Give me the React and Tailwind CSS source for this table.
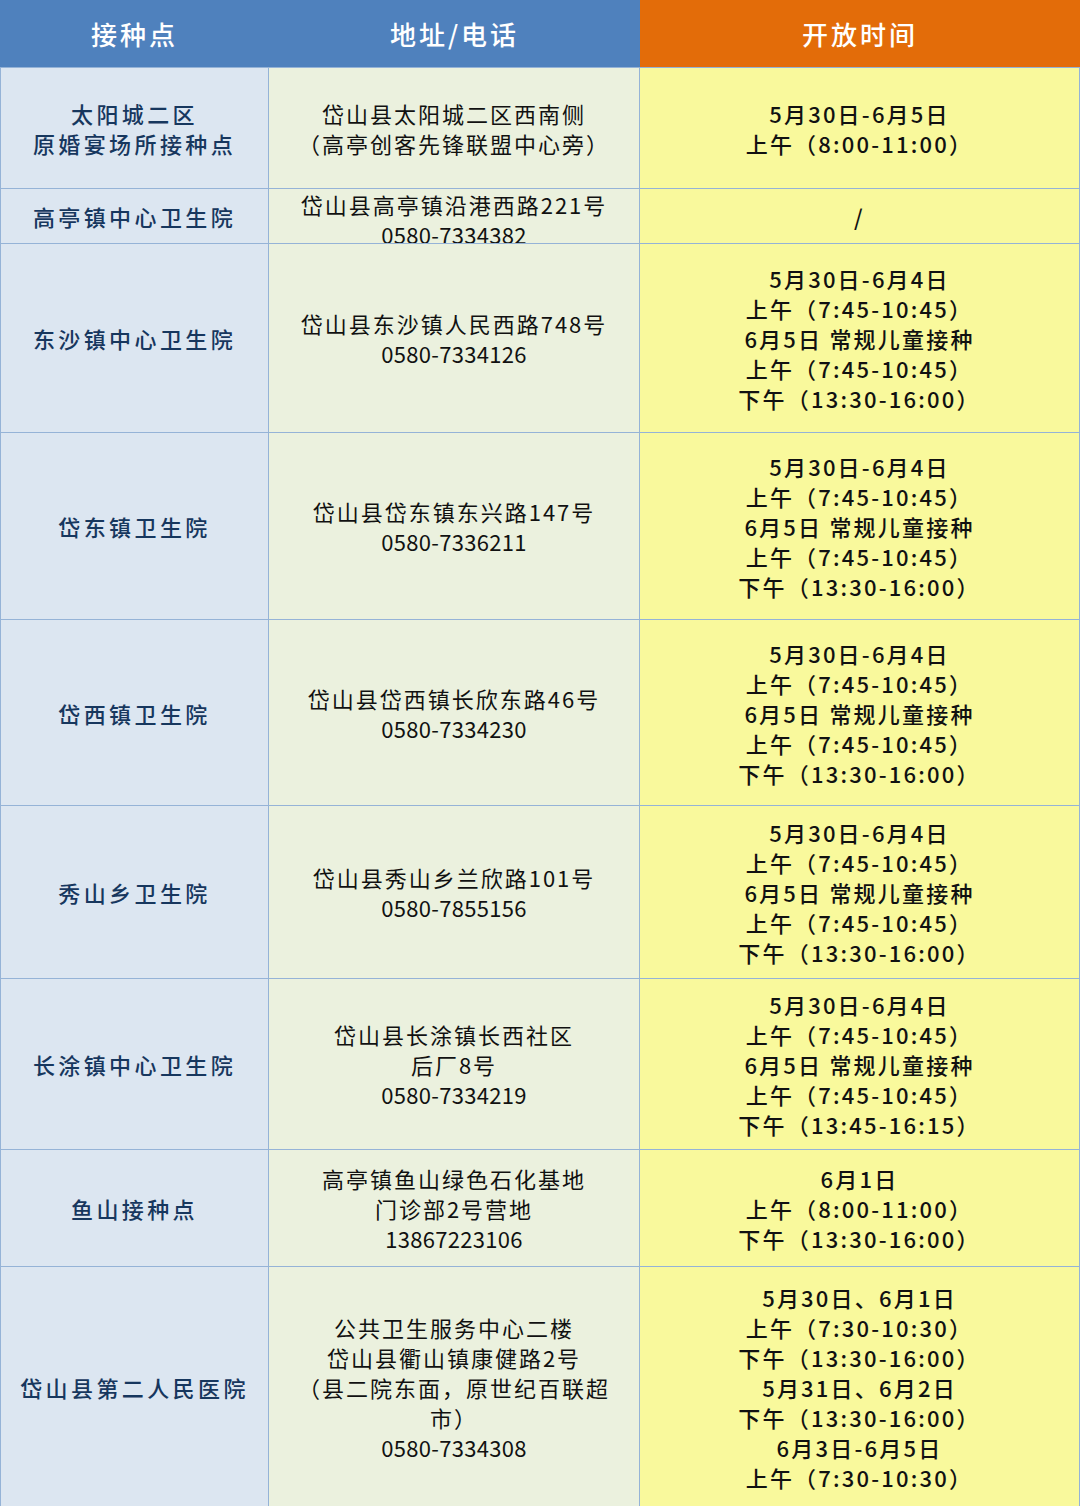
const rows = [
  {
    h: 'h-[121px]',
    name: ['太阳城二区', '原婚宴场所接种点'],
    addr: ['岱山县太阳城二区西南侧', '（高亭创客先锋联盟中心旁）'],
    time: ['5月30日-6月5日', '上午（8:00-11:00）'],
  },
  {
    h: 'h-[55px]',
    name: ['高亭镇中心卫生院'],
    addr: ['岱山县高亭镇沿港西路221号', '0580-7334382'],
    time: ['/'],
    clip: true,
  },
  {
    h: 'h-[189px]',
    name: ['东沙镇中心卫生院'],
    addr: ['岱山县东沙镇人民西路748号', '0580-7334126'],
    time: ['5月30日-6月4日', '上午（7:45-10:45）', '6月5日 常规儿童接种', '上午（7:45-10:45）', '下午（13:30-16:00）'],
  },
  {
    h: 'h-[187px]',
    name: ['岱东镇卫生院'],
    addr: ['岱山县岱东镇东兴路147号', '0580-7336211'],
    time: ['5月30日-6月4日', '上午（7:45-10:45）', '6月5日 常规儿童接种', '上午（7:45-10:45）', '下午（13:30-16:00）'],
  },
  {
    h: 'h-[186px]',
    name: ['岱西镇卫生院'],
    addr: ['岱山县岱西镇长欣东路46号', '0580-7334230'],
    time: ['5月30日-6月4日', '上午（7:45-10:45）', '6月5日 常规儿童接种', '上午（7:45-10:45）', '下午（13:30-16:00）'],
  },
  {
    h: 'h-[173px]',
    name: ['秀山乡卫生院'],
    addr: ['岱山县秀山乡兰欣路101号', '0580-7855156'],
    time: ['5月30日-6月4日', '上午（7:45-10:45）', '6月5日 常规儿童接种', '上午（7:45-10:45）', '下午（13:30-16:00）'],
  },
  {
    h: 'h-[171px]',
    name: ['长涂镇中心卫生院'],
    addr: ['岱山县长涂镇长西社区', '后厂8号', '0580-7334219'],
    time: ['5月30日-6月4日', '上午（7:45-10:45）', '6月5日 常规儿童接种', '上午（7:45-10:45）', '下午（13:45-16:15）'],
  },
  {
    h: 'h-[117px]',
    name: ['鱼山接种点'],
    addr: ['高亭镇鱼山绿色石化基地', '门诊部2号营地', '13867223106'],
    time: ['6月1日', '上午（8:00-11:00）', '下午（13:30-16:00）'],
  },
  {
    h: 'h-[240px]',
    name: ['岱山县第二人民医院'],
    addr: ['公共卫生服务中心二楼', '岱山县衢山镇康健路2号', '（县二院东面，原世纪百联超', '市）', '0580-7334308'],
    time: ['5月30日、6月1日', '上午（7:30-10:30）', '下午（13:30-16:00）', '5月31日、6月2日', '下午（13:30-16:00）', '6月3日-6月5日', '上午（7:30-10:30）'],
  },
];

function Lines({ lines }) {
  return lines.map((l, i) => (
    // phone numbers sit tighter than the CJK lines
    <div key={i} className={/^[0-9-]+$/.test(l) ? 'whitespace-pre tracking-[0.3px]' : 'whitespace-pre'}>
      {l}
    </div>
  ));
}

export default function App() {
  return (
    <div
      className="w-[1080px] h-[1506px] overflow-hidden bg-white text-[22px] leading-[30px]"
      style={{ fontFamily: '"Noto Sans CJK SC", "Noto Sans", sans-serif' }}
    >
      {/* header */}
      <div className="grid grid-cols-[269px_371px_440px] h-[67px] text-white text-[26px] font-medium tracking-[3px]">
        <div className="bg-[#4f81bd] flex items-center justify-center">接种点</div>
        <div className="bg-[#4f81bd] flex items-center justify-center">地址/电话</div>
        <div className="bg-[#e36c09] flex items-center justify-center">开放时间</div>
      </div>

      {rows.map((r, i) => (
        <div
          key={i}
          className={`grid grid-cols-[269px_371px_440px] border-t border-[#95b3d7] ${r.h}`}
        >
          <div className="bg-[#dce6f1] border-l border-r border-[#95b3d7] flex items-center justify-center text-center text-[#17375e] font-medium tracking-[3.4px]">
            <div>
              <Lines lines={r.name} />
            </div>
          </div>
          <div
            className={`bg-[#ebf1de] border-r border-[#95b3d7] flex justify-center text-center text-[#111] tracking-[2px] overflow-hidden ${
              r.clip ? 'items-start' : 'items-center'
            }`}
          >
            <div>
              <Lines lines={r.addr} />
            </div>
          </div>
          <div className="bg-[#f9f99c] border-r border-[#95b3d7] flex items-center justify-center text-center text-[#111] font-medium tracking-[2.2px]">
            <div>
              <Lines lines={r.time} />
            </div>
          </div>
        </div>
      ))}
    </div>
  );
}
